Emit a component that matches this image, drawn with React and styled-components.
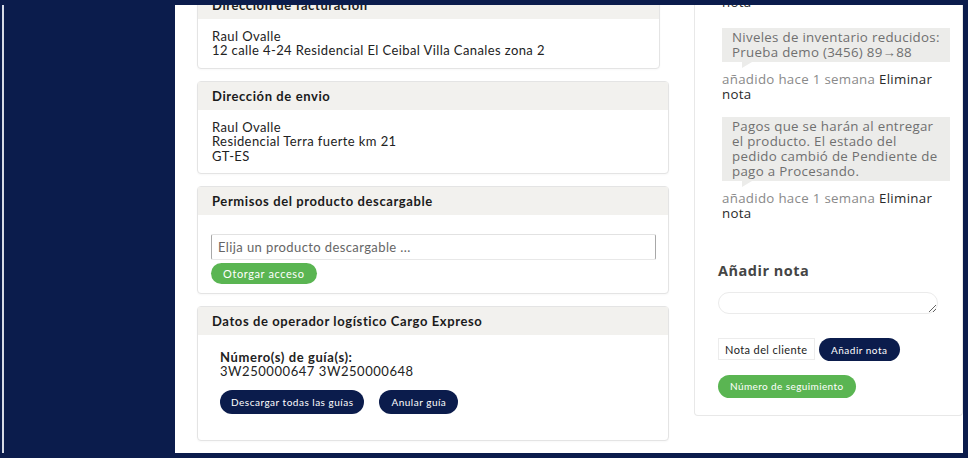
import styled, { createGlobalStyle } from "styled-components";

const navy = "#0b1c4c";
const green = "#5ab552";

const GlobalStyle = createGlobalStyle`
  * { box-sizing: border-box; }
  html, body { margin: 0; padding: 0; }
  body {
    background: ${navy};
    font-family: Lato, "Noto Sans", sans-serif;
    color: #222;
  }
`;

const Frame = styled.div`
  display: flex;
  width: 968px;
  height: 458px;
  padding: 5px 5px 5px 0;
  background: ${navy};
  overflow: hidden;
`;

const Sidebar = styled.aside`
  flex: 0 0 173px;
  margin-left: 2px;
  border-left: 2px solid #d6dbe6;
  background: ${navy};
`;

const Main = styled.main`
  flex: 1;
  background: #fff;
  overflow: hidden;
`;

/* page is scrolled down a little: content starts above the visible area */
const Scrolled = styled.div`
  display: grid;
  grid-template-columns: 472px 269px;
  column-gap: 25px;
  align-items: start;
  padding-left: 22px;
  margin-top: -25px;
`;

const LeftColumn = styled.div`
  display: flex;
  flex-direction: column;
  gap: 12px;
  padding-top: 10px;
`;

const Panel = styled.section`
  border: 1px solid #e4e4e4;
  border-radius: 4px;
  background: #fff;
  margin-right: ${(p) => p.$inset || 0}px;
  box-shadow: 0 1px 2px rgba(0, 0, 0, 0.03);
`;

const PanelHeader = styled.h3`
  margin: 0;
  height: 28px;
  display: flex;
  align-items: center;
  padding: 0 14px;
  background: #f2f1ee;
  font-size: 13px;
  font-weight: 700;
  letter-spacing: 0.6px;
  color: #1b1b1b;
  white-space: nowrap;
`;

const PanelBody = styled.div`
  padding: ${(p) => p.$pad || "10px 14px"};
  font-size: 13px;
  letter-spacing: 0.4px;
  line-height: 14.4px;
  color: #222;
`;

const SelectBox = styled.div`
  height: 26px;
  display: flex;
  align-items: center;
  padding-left: 6px;
  border: 1px solid #a8a8a8;
  border-top-color: #e2e2e2;
  border-bottom-color: #e8e8e8;
  border-radius: 2px;
  font-size: 13px;
  letter-spacing: 0.4px;
  color: #666;
`;

const Pill = styled.button`
  height: ${(p) => p.$h || 23}px;
  padding: 0 ${(p) => p.$px || 11}px;
  border: none;
  border-radius: 999px;
  background: ${(p) => (p.$green ? green : navy)};
  color: #fff;
  font-family: Lato, "Noto Sans", sans-serif;
  font-size: ${(p) => p.$fs || 10}px;
  letter-spacing: ${(p) => p.$ls || 0}px;
  cursor: pointer;
  white-space: nowrap;
`;

const GrantRow = styled.div`
  margin-top: 3px;
`;

const GuideTitle = styled.div`
  font-weight: 700;
  letter-spacing: 0.6px;
`;

const GuideNumbers = styled.div`
  letter-spacing: 0.55px;
`;

const ButtonRow = styled.div`
  display: flex;
  gap: 15px;
  margin-top: 11px;
`;

const RightPanel = styled.aside`
  border: 1px solid #e8e8e8;
  border-top: none;
  border-radius: 0 0 4px 4px;
  padding: 0 0 17px 23px;
  font-family: "Open Sans", "Noto Sans", sans-serif;
`;

const Notes = styled.ul`
  list-style: none;
  margin: 0;
  padding: 0 12px 0 4px;
`;

const Note = styled.li`
  margin-bottom: ${(p) => p.$mb ?? 15}px;
`;

const NoteContent = styled.div`
  position: relative;
  padding: 2px 5px 2px 10px;
  background: #ececea;
  font-size: 13.3px;
  letter-spacing: 0.3px;
  line-height: 15px;
  color: #707070;

  &::after {
    content: "";
    position: absolute;
    bottom: -6px;
    left: 20px;
    border-style: solid;
    border-width: 6px 10px 0 0;
    border-color: #ececea transparent;
  }
`;

const NoteMeta = styled.p`
  margin: ${(p) => (p.$first ? 0 : 10)}px 0 0;
  font-size: 13.3px;
  letter-spacing: 0.3px;
  line-height: 15px;
  color: #8a8a8a;

  a {
    color: #2a2a2a;
    text-decoration: none;
  }
`;

const AddNote = styled.div`
  padding-top: 40px;
`;

const AddNoteTitle = styled.h4`
  margin: 0;
  font-size: 14.5px;
  line-height: 19px;
  font-weight: 700;
  color: #454545;
  letter-spacing: 0.5px;
`;

const NoteText = styled.textarea`
  display: block;
  width: 220px;
  height: 22px;
  margin-top: 12px;
  border: 1px solid #ebebeb;
  border-radius: 11px;
  resize: both;
  outline: none;
`;

const NoteActions = styled.div`
  display: flex;
  align-items: flex-start;
  gap: 4px;
  margin-top: 24px;
`;

const NoteType = styled.div`
  width: 97px;
  height: 22px;
  display: flex;
  align-items: center;
  padding-left: 6px;
  border: 1px solid #ececec;
  font-family: Lato, "Noto Sans", sans-serif;
  font-size: 11px;
  letter-spacing: 0.4px;
  color: #222;
  white-space: nowrap;
`;

const TrackRow = styled.div`
  margin-top: 12px;
`;

export default function App() {
  return (
    <>
      <GlobalStyle />
      <Frame>
        <Sidebar />
        <Main>
          <Scrolled>
            <LeftColumn>
              <Panel $inset={9}>
                <PanelHeader>Dirección de facturación</PanelHeader>
                <PanelBody>
                  Raul Ovalle
                  <br />
                  12 calle 4-24 Residencial El Ceibal Villa Canales zona 2
                </PanelBody>
              </Panel>

              <Panel>
                <PanelHeader>Dirección de envio</PanelHeader>
                <PanelBody>
                  Raul Ovalle
                  <br />
                  Residencial Terra fuerte km 21
                  <br />
                  GT-ES
                </PanelBody>
              </Panel>

              <Panel>
                <PanelHeader>Permisos del producto descargable</PanelHeader>
                <PanelBody $pad="19px 12px 9px 13px">
                  <SelectBox>Elija un producto descargable ...</SelectBox>
                  <GrantRow>
                    <Pill $green $h={21} $px={12} $fs={11} $ls={0.6}>
                      Otorgar acceso
                    </Pill>
                  </GrantRow>
                </PanelBody>
              </Panel>

              <Panel>
                <PanelHeader>Datos de operador logístico Cargo Expreso</PanelHeader>
                <PanelBody $pad="15px 22px 26px">
                  <GuideTitle>Número(s) de guía(s):</GuideTitle>
                  <GuideNumbers>3W250000647 3W250000648</GuideNumbers>
                  <ButtonRow>
                    <Pill $h={24} $px={11} $ls={0.5}>Descargar todas las guías</Pill>
                    <Pill $h={24} $px={12} $ls={0.5}>Anular guía</Pill>
                  </ButtonRow>
                </PanelBody>
              </Panel>
            </LeftColumn>

            <RightPanel>
              <Notes>
                <Note $mb={18}>
                  <NoteMeta $first>
                    añadido hace 1 semana <a href="#">Eliminar nota</a>
                  </NoteMeta>
                </Note>
                <Note>
                  <NoteContent>
                    Niveles de inventario reducidos: Prueba demo (3456) 89→88
                  </NoteContent>
                  <NoteMeta>
                    añadido hace 1 semana <a href="#">Eliminar nota</a>
                  </NoteMeta>
                </Note>
                <Note $mb={0}>
                  <NoteContent>
                    Pagos que se harán al entregar el producto. El estado del
                    pedido cambió de Pendiente de pago a Procesando.
                  </NoteContent>
                  <NoteMeta>
                    añadido hace 1 semana <a href="#">Eliminar nota</a>
                  </NoteMeta>
                </Note>
              </Notes>

              <AddNote>
                <AddNoteTitle>Añadir nota</AddNoteTitle>
                <NoteText />
                <NoteActions>
                  <NoteType>Nota del cliente</NoteType>
                  <Pill $h={23} $px={12} $ls={0.5}>Añadir nota</Pill>
                </NoteActions>
                <TrackRow>
                  <Pill $green $h={23} $px={12} $ls={0.4}>
                    Número de seguimiento
                  </Pill>
                </TrackRow>
              </AddNote>
            </RightPanel>
          </Scrolled>
        </Main>
      </Frame>
    </>
  );
}
